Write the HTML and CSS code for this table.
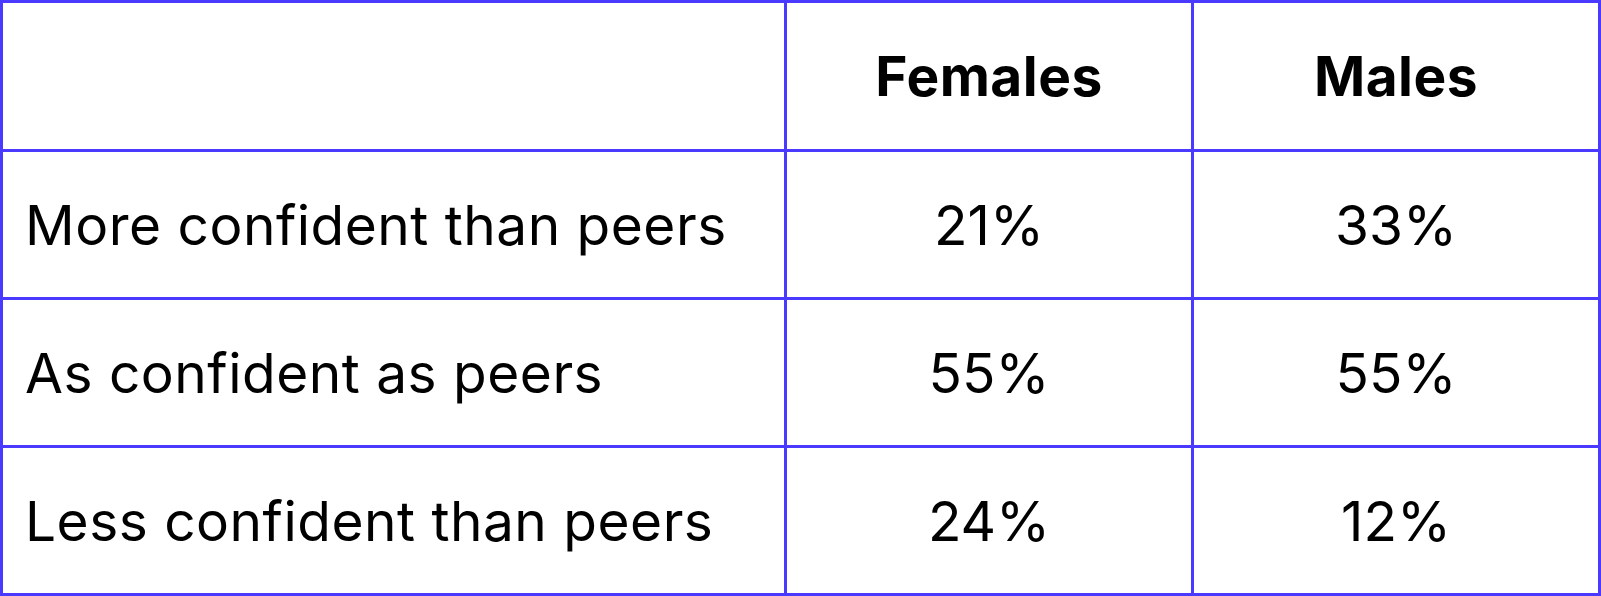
FILE: index.html
```html
<!DOCTYPE html>
<html lang="en">
<head>
    <meta charset="UTF-8">
    <meta name="viewport" content="width=device-width, initial-scale=1.0">
    <title>Confidence compared to peers</title>
    <link rel="stylesheet" href="styles.css">
</head>
<body>
    <table class="stats-table">
        <colgroup>
            <col class="col-label">
            <col class="col-value">
            <col class="col-value">
        </colgroup>
        <thead>
            <tr class="head-row">
                <th></th>
                <th>Females</th>
                <th>Males</th>
            </tr>
        </thead>
        <tbody>
            <tr>
                <td class="label">More confident than peers</td>
                <td>21%</td>
                <td>33%</td>
            </tr>
            <tr>
                <td class="label">As confident as peers</td>
                <td>55%</td>
                <td>55%</td>
            </tr>
            <tr>
                <td class="label">Less confident than peers</td>
                <td>24%</td>
                <td>12%</td>
            </tr>
        </tbody>
    </table>
</body>
</html>
```

FILE: styles.css
```css
:root {
    --line-color: #4a3aff;
    --text-color: #000000;
    --cell-bg: #ffffff;
}

body {
    margin: 0;
    background-color: #ffffff;
    font-family: Inter, "Liberation Sans", sans-serif;
    color: var(--text-color);
}

.stats-table {
    width: 1601px;
    table-layout: fixed;
    border-collapse: separate;
    border-spacing: 3px;
    background-color: var(--line-color);
}

.col-label {
    width: 781px;
}

.col-value {
    width: 404px;
}

.stats-table th,
.stats-table td {
    background-color: var(--cell-bg);
    padding: 0;
    height: 145px;
    text-align: center;
    vertical-align: middle;
    font-size: 55px;
    font-weight: 400;
}

.head-row th {
    height: 146px;
    font-weight: 700;
    letter-spacing: 0.5px;
}

.stats-table td.label {
    text-align: left;
    padding-left: 22px;
    letter-spacing: 0.5px;
}
```
